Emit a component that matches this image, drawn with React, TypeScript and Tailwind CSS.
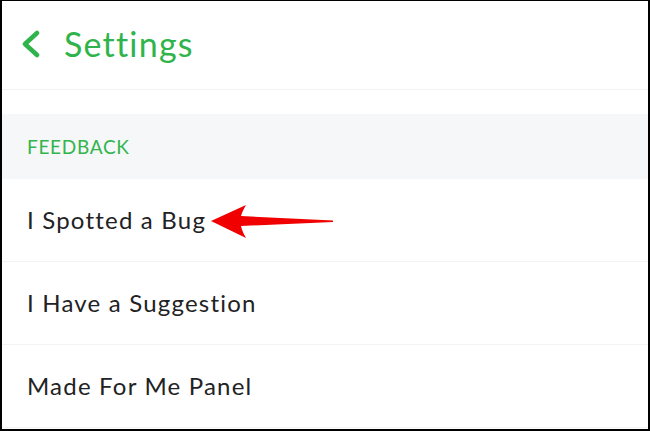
const rows = ["I Spotted a Bug", "I Have a Suggestion", "Made For Me Panel"];

const BackChevron = () => (
  <svg width="20" height="28" viewBox="0 0 20 28" fill="none">
    <path d="M16 3 L4 14 L16 25" stroke="#2fb44b" strokeWidth="4.5" strokeLinecap="round" strokeLinejoin="round" />
  </svg>
);

const RedArrow = () => (
  <svg width="126" height="36" viewBox="0 0 126 36" className="shrink-0">
    <path
      d="M2 17 L37 1 Q33 8 32 12 L124 16.5 L124 18 L32 22 Q33 27 37 34 Z"
      fill="#f00000"
    />
  </svg>
);

export default function App() {
  return (
    <div
      className="w-[650px] h-[431px] overflow-hidden bg-white border-t border-l-2 border-r-2 border-b-2 border-black flex flex-col"
      style={{ fontFamily: "Lato, 'Noto Sans', sans-serif" }}
    >
      <div className="h-[89px] shrink-0 flex items-center pl-[19px] gap-[23px] border-b border-[#f2f3f4] pb-[2px]">
        <BackChevron />
        <span className="text-[34px] text-[#2fb44b] leading-none tracking-[1.2px]">Settings</span>
      </div>
      <div className="h-[24px] shrink-0" />
      <div className="h-[65px] shrink-0 bg-[#f6f7f9] flex items-center pl-[25px]">
        <span className="text-[19px] text-[#31b54c] leading-none tracking-[0.7px]">FEEDBACK</span>
      </div>
      {rows.map((r, i) => (
        <div
          key={r}
          className="h-[83px] shrink-0 flex items-center pl-[25px] border-b border-[#f2f3f4]"
        >
          <span className="text-[24px] text-[#222224] leading-none tracking-[1.2px]">{r}</span>
          {i === 0 && (
            <div className="ml-[3px] mt-[4px]">
              <RedArrow />
            </div>
          )}
        </div>
      ))}
    </div>
  );
}
